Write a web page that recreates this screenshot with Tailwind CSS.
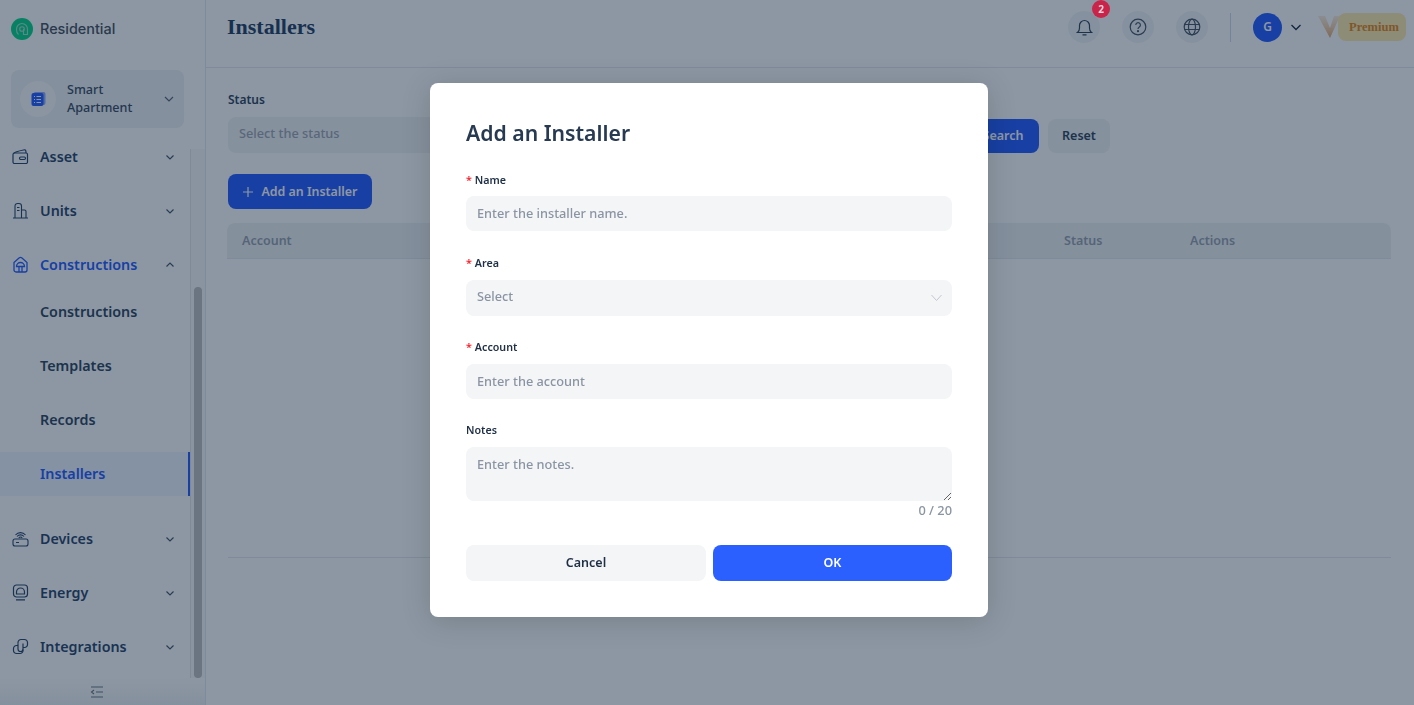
<!DOCTYPE html>
<html lang="en">
<head>
    <meta charset="UTF-8">
    <title>Installers</title>
    <script src="https://cdn.jsdelivr.net/npm/@tailwindcss/browser@4"></script>
</head>
<body class="w-[1414px] h-[705px] overflow-hidden bg-white font-['Noto_Sans',sans-serif] text-[#1f2f45]">
    <div class="flex w-full h-full">
        <!-- sidebar -->
        <aside class="relative w-[206px] h-full shrink-0 border-r border-[#e6e9ee] flex flex-col bg-white">
            <div class="h-[70px] shrink-0 pl-[11px] pt-[18px] flex items-start gap-[7px]">
                <svg class="w-[22px] h-[22px]" viewBox="0 0 22 22" fill="none"><circle cx="11" cy="11" r="11" fill="#0ed68c"/><path d="M7.500 16.500C6 15.500 5.500 13.500 5.500 11.500C5.500 8 8 5.500 11 5.500C14 5.500 16.500 8 16.500 11.500V16.500H12.500V11" stroke="#a8e4cc" stroke-width="1.100"/><circle cx="11" cy="11" r="2.300" stroke="#a8e4cc" stroke-width="1.100"/></svg>
                <span class="font-['Inter',sans-serif] font-medium text-[14.400px] leading-[22px] text-[#4b5563]">Residential</span>
            </div>
            <div class="mx-[11px] w-[173px] h-[58px] shrink-0 rounded-lg bg-[#eef2f4] flex items-center pl-[9px] pr-[9px]">
                <span class="w-9 h-9 rounded-full bg-[#fafbfb] flex items-center justify-center">
                    <svg class="w-4 h-4" viewBox="0 0 16 16"><rect x="3.500" y="1" width="12" height="13" rx="2" fill="#2b60ff" fill-opacity=".5"/><rect x="1.500" y="2" width="12" height="13" rx="2" fill="#2b60ff"/><path d="M4 5.500H5M6.500 5.500H11M4 8.500H5M6.500 8.500H11M4 11.500H5M6.500 11.500H11" stroke="#fff" stroke-width="1"/></svg>
                </span>
                <span class="ml-[11px] w-[75px] text-[12.600px] leading-[18px] font-medium text-[#3f5068]">Smart Apartment</span>
                <svg class="ml-auto w-3 h-3 text-[#5f6b7a]" viewBox="0 0 12 12" fill="none" stroke="currentColor" stroke-width="1.200"><path d="M2 4l4 4 4-4"/></svg>
            </div>
            <nav class="flex-1 min-h-0 overflow-hidden pt-[7px] text-[14.300px] font-semibold text-[#334a63]">
                <a class="flex items-center h-[44px] pb-[1px] pl-3 pr-[30px] mb-[10px] text-[#2f4a6e]">
                    <svg class="w-[17px] h-[17px] mr-[11px]" viewBox="0 0 17 17" fill="none" stroke="currentColor" stroke-width="1.200"><path d="M1 6.500V14a1.500 1.500 0 0 0 1.500 1.500h11.500a1.500 1.500 0 0 0 1.500-1.500V6.500A1.500 1.500 0 0 0 14 5H2.500A1.500 1.500 0 0 0 1 6.500z"/><path d="M1.500 5.500C3 3.500 9 2.500 12.500 1.800c1-.2 1.500.4 1.500 3.200"/><rect x="7.500" y="9" width="6" height="2.500" rx="1.200"/></svg>
                    <span>Asset</span>
                    <svg class="ml-auto w-[10px] h-[10px] text-[#4b5a6c]" viewBox="0 0 10 10" fill="none" stroke="currentColor" stroke-width="1.200"><path d="M1.500 3.500L5 7l3.500-3.500"/></svg>
                </a>
                <a class="flex items-center h-[44px] pb-[1px] pl-3 pr-[30px] mb-[10px] text-[#2f4a6e]">
                    <svg class="w-[17px] h-[17px] mr-[11px]" viewBox="0 0 17 17" fill="none" stroke="currentColor" stroke-width="1.100"><path d="M1 16H16M3 16V4a2.500 2.500 0 0 1 2.500-2.500H7A2.500 2.500 0 0 1 9.500 4V16M9.500 8H12.500a1.500 1.500 0 0 1 1.500 1.500V16M5 5.500H7.500M5 8.500H7.500"/></svg>
                    <span>Units</span>
                    <svg class="ml-auto w-[10px] h-[10px] text-[#4b5a6c]" viewBox="0 0 10 10" fill="none" stroke="currentColor" stroke-width="1.200"><path d="M1.500 3.500L5 7l3.500-3.500"/></svg>
                </a>
                <a class="flex items-center h-[44px] pb-[1px] pl-3 pr-[30px] text-[#2b60ff]">
                    <svg class="w-[17px] h-[17px] mr-[11px]" viewBox="0 0 17 17" fill="none" stroke="currentColor" stroke-width="1.300"><path d="M2 6.500L7 2a2.300 2.300 0 0 1 3 0l5 4.500V14a2 2 0 0 1-2 2H4a2 2 0 0 1-2-2z"/><path d="M4.500 10.500a4 4 0 0 1 8 0zM7 10.500V16M10 10.500V16"/></svg>
                    <span>Constructions</span>
                    <svg class="ml-auto w-[10px] h-[10px] text-[#4b5a6c]" viewBox="0 0 10 10" fill="none" stroke="currentColor" stroke-width="1.200"><path d="M1.500 6.500L5 3l3.500 3.500"/></svg>
                </a>
                <a class="flex items-center h-[44px] pb-[1px] pl-10 mt-[3px] mb-[10px]">Constructions</a>
                <a class="flex items-center h-[44px] pb-[1px] pl-10 mb-[10px]">Templates</a>
                <a class="flex items-center h-[44px] pb-[1px] pl-10 mb-[10px]">Records</a>
                <a class="flex items-center w-[190px] h-[44px] pb-[1px] pl-10 mb-[21px] bg-[#eef6ff] border-r-2 border-[#2b60ff] text-[#2b60ff]">Installers</a>
                <a class="flex items-center h-[44px] pb-[1px] pl-3 pr-[30px] mb-[10px] text-[#2f4a6e]">
                    <svg class="w-[17px] h-[17px] mr-[11px]" viewBox="0 0 17 17" fill="none" stroke="currentColor" stroke-width="1.100"><rect x="1" y="9" width="15" height="7" rx="2"/><path d="M5 6.500a4.500 4.500 0 0 1 7 0M6.800 8a2 2 0 0 1 3.400 0M3.500 5a6.500 6.500 0 0 1 10 0M4 12.500h3"/></svg>
                    <span>Devices</span>
                    <svg class="ml-auto w-[10px] h-[10px] text-[#4b5a6c]" viewBox="0 0 10 10" fill="none" stroke="currentColor" stroke-width="1.200"><path d="M1.500 3.500L5 7l3.500-3.500"/></svg>
                </a>
                <a class="flex items-center h-[44px] pb-[1px] pl-3 pr-[30px] mb-[10px] text-[#2f4a6e]">
                    <svg class="w-[17px] h-[17px] mr-[11px]" viewBox="0 0 17 17" fill="none" stroke="currentColor" stroke-width="1.200"><rect x="1.500" y="1" width="14" height="12" rx="3"/><path d="M4.500 10V8a4 4 0 0 1 8 0v2zM4 15.800H13"/></svg>
                    <span>Energy</span>
                    <svg class="ml-auto w-[10px] h-[10px] text-[#4b5a6c]" viewBox="0 0 10 10" fill="none" stroke="currentColor" stroke-width="1.200"><path d="M1.500 3.500L5 7l3.500-3.500"/></svg>
                </a>
                <a class="flex items-center h-[44px] pb-[1px] pl-3 pr-[30px] text-[#2f4a6e]">
                    <svg class="w-[17px] h-[17px] mr-[11px]" viewBox="0 0 17 17" fill="none" stroke="currentColor" stroke-width="1.200"><path d="M6 5.500V4.500a3 3 0 0 1 3-3h3.500a3 3 0 0 1 3 3v2a3 3 0 0 1-3 3H11M11 11.500v1a3 3 0 0 1-3 3H4.500a3 3 0 0 1-3-3v-2a3 3 0 0 1 3-3H6"/><path d="M6 5.500V11a2.500 2.500 0 0 0 5 0V5.500"/></svg>
                    <span>Integrations</span>
                    <svg class="ml-auto w-[10px] h-[10px] text-[#4b5a6c]" viewBox="0 0 10 10" fill="none" stroke="currentColor" stroke-width="1.200"><path d="M1.500 3.500L5 7l3.500-3.500"/></svg>
                </a>
            </nav>
            <div class="h-[27px] shrink-0 flex items-center justify-center pr-[12px] bg-gradient-to-b from-white to-[#f1f3f6]">
                <svg class="w-[13px] h-[12px] text-[#6f7a88]" viewBox="0 0 13 12" fill="none" stroke="currentColor" stroke-width="1.100"><path d="M1 1H13M6 6H13M1 11H13M4 4L1.500 6 4 8"/></svg>
            </div>
            <!-- scrollbar -->
            <div class="absolute left-[190px] top-[149px] w-[15px] h-[529px] bg-[#fafafa] border-l border-[#e8e8e8]">
                <div class="absolute left-[3px] top-[138px] w-2 h-[391px] rounded-full bg-[#c1c1c1]"></div>
            </div>
        </aside>

        <!-- main -->
        <main class="flex-1 min-w-0 flex flex-col">
            <header class="h-[68px] shrink-0 border-b border-[#e6e9ee] flex items-start pl-[21px] pt-[12px]">
                <h1 class="font-['Liberation_Serif',serif] font-bold text-[22px] leading-[30px] text-[#2a4468]">Installers</h1>
                <div class="ml-auto flex items-center h-8 mt-[-1px]">
                    <span class="w-8 h-8 rounded-full bg-[#f3f5f7] flex items-center justify-center text-[#374860]">
                        <svg class="w-[17px] h-[17px]" viewBox="0 0 17 17" fill="none" stroke="currentColor" stroke-width="1.200"><path d="M1.500 13.500C3 12.500 3.500 11 3.500 9V6.500a5 5 0 0 1 10 0V9c0 2 .5 3.500 2 4.500zM6.500 15.800h4"/></svg>
                    </span>
                    <span class="ml-[22px] w-8 h-8 rounded-full bg-[#f3f5f7] flex items-center justify-center text-[#4b5a6c]">
                        <svg class="w-[18px] h-[18px]" viewBox="0 0 18 18" fill="none" stroke="currentColor" stroke-width="1.200"><circle cx="9" cy="9" r="7.800"/><path d="M6.800 7a2.300 2.300 0 1 1 3.500 2c-.8.500-1.300 1-1.300 2"/><circle cx="9" cy="13.200" r=".5" fill="currentColor"/></svg>
                    </span>
                    <span class="ml-[22px] w-8 h-8 rounded-full bg-[#f3f5f7] flex items-center justify-center text-[#4b5a6c]">
                        <svg class="w-[18px] h-[18px]" viewBox="0 0 18 18" fill="none" stroke="currentColor" stroke-width="1.200"><circle cx="9" cy="9" r="7.800"/><ellipse cx="9" cy="9" rx="3.500" ry="7.800"/><path d="M1.500 6.500H16.500M1.500 11.500H16.500"/></svg>
                    </span>
                    <span class="ml-[22px] w-px h-[29px] bg-[#d6dbe3]"></span>
                    <span class="ml-[22px] w-[29px] h-[29px] rounded-full bg-[#2b60ff] text-white text-[12px] font-semibold flex items-center justify-center">G</span>
                    <svg class="ml-[8px] w-[12px] h-[12px] text-[#1f2f45]" viewBox="0 0 12 12" fill="none" stroke="currentColor" stroke-width="1.300"><path d="M1.500 4L6 8.500 10.500 4"/></svg>
                    <span class="relative ml-[16px] w-[88px] h-7 mr-[8px]">
                        <svg class="absolute left-0 top-[3px] w-[22px] h-[22px]" viewBox="0 0 22 22">
                            <defs><linearGradient id="vlogo" x1="0" y1="0" x2="0" y2="1"><stop offset="0" stop-color="#f6d9b8" stop-opacity=".5"/><stop offset="1" stop-color="#e6a970"/></linearGradient></defs>
                            <path d="M0 0H7L12 12 16 0H22L12 22z" fill="url(#vlogo)"/>
                        </svg>
                        <span class="absolute left-[20px] top-0 w-[68px] h-7 pl-[4px] rounded-lg bg-[#ffebb0] font-['Liberation_Serif',serif] font-bold text-[12.500px] text-[#e88a1e] flex items-center justify-center">Premium</span>
                    </span>
                </div>
            </header>
            <div class="flex-1 min-h-0 pl-[22px] pr-[23px] pt-[24px]">
                <label class="block text-[12px] leading-4 font-semibold text-[#334a63]">Status</label>
                <div class="flex items-end h-[38px] mt-[7px]">
                    <div class="w-[700px] h-9 pb-[2px] rounded-lg bg-[#f3f4f6] flex items-center px-[11px] text-[12.750px] font-medium text-[#a0a8b4]">Select the status</div>
                    <button class="ml-[39px] w-[72px] h-[34px] rounded-lg bg-[#2b60ff] text-white text-[12.500px] font-semibold">Search</button>
                    <button class="ml-[9px] w-[62px] h-[34px] rounded-lg bg-[#f3f4f6] text-[12.500px] font-semibold text-[#334a63]">Reset</button>
                </div>
                <button class="mt-[21px] w-[144px] h-[35px] pt-[1px] rounded-lg bg-[#2b60ff] text-white text-[12.400px] font-semibold flex items-center justify-center gap-[9px]">
                    <svg class="w-[10px] h-[10px]" viewBox="0 0 10 10" fill="none" stroke="currentColor" stroke-width="1.200"><path d="M5 0V10M0 5H10"/></svg>
                    Add an Installer
                </button>
                <div class="mt-[14px] h-[36px] pt-[1px] -ml-px rounded-t-lg bg-[#f1f3f5] border-b border-[#e6e9ee] flex items-center text-[12.500px] font-semibold text-[#9aa3b0]">
                    <span class="pl-[15px] w-[837px]">Account</span>
                    <span class="w-[126px]">Status</span>
                    <span>Actions</span>
                </div>
                <div class="h-[299px] border-b border-[#e6e9ee]"></div>
            </div>
        </main>
    </div>

    <!-- dialog -->
    <div class="fixed inset-0 bg-[#021833]/45 pl-[430px] pt-[83px]">
        <div class="w-[558px] h-[534px] rounded-lg bg-white px-9 pt-[34px] shadow-[0_4px_30px_rgba(0,0,0,0.16)]">
            <h2 class="text-[21.200px] leading-[32px] font-semibold text-[#273a52]">Add an Installer</h2>
            <label class="block mt-[23px] text-[10.700px] leading-4 font-semibold"><span class="text-[#f5222d] mr-[3px]">*</span>Name</label>
            <input class="block mt-[8px] w-full h-[35px] pb-[2px] rounded-lg bg-[#f4f5f7] px-[11px] text-[12.750px] font-medium placeholder:text-[#8a94a2]" placeholder="Enter the installer name.">
            <label class="block mt-[24px] text-[10.700px] leading-4 font-semibold"><span class="text-[#f5222d] mr-[3px]">*</span>Area</label>
            <div class="mt-[9px] h-9 pb-[2px] rounded-lg bg-[#f4f5f7] pl-[11px] pr-[10px] flex items-center justify-between text-[12.750px] font-medium text-[#8a94a2]">
                <span>Select</span>
                <svg class="w-[11px] h-[11px] text-[#c3c8cf]" viewBox="0 0 11 11" fill="none" stroke="currentColor" stroke-width="1"><path d="M.5 3L5.500 8.500 10.500 3"/></svg>
            </div>
            <label class="block mt-[23px] text-[10.700px] leading-4 font-semibold"><span class="text-[#f5222d] mr-[3px]">*</span>Account</label>
            <input class="block mt-[9px] w-full h-[35px] pb-[2px] rounded-lg bg-[#f4f5f7] px-[11px] text-[12.750px] font-medium placeholder:text-[#8a94a2]" placeholder="Enter the account">
            <label class="block mt-[23px] text-[10.700px] leading-4 font-semibold">Notes</label>
            <textarea class="block mt-[9px] w-full h-[54px] rounded-lg bg-[#f4f5f7] px-[11px] py-[8px] text-[12.750px] leading-[18px] font-medium placeholder:text-[#8a94a2]" placeholder="Enter the notes."></textarea>
            <div class="h-[18px] text-right text-[12.800px] leading-[18px] font-medium text-[#8a94a2]">0 / 20</div>
            <div class="mt-[26px] flex gap-[7px]">
                <button class="w-[240px] h-9 rounded-lg bg-[#f4f5f7] text-[12.500px] font-semibold">Cancel</button>
                <button class="w-[239px] h-9 rounded-lg bg-[#2b60ff] text-white text-[12.500px] font-semibold">OK</button>
            </div>
        </div>
        <!-- notification count sits above the mask -->
        <span class="absolute left-[1092px] top-0 w-[18px] h-[18px] rounded-full bg-[#c9254a] text-[#f3d5dc] text-[10px] font-bold flex items-center justify-center">2</span>
    </div>
</body>
</html>
